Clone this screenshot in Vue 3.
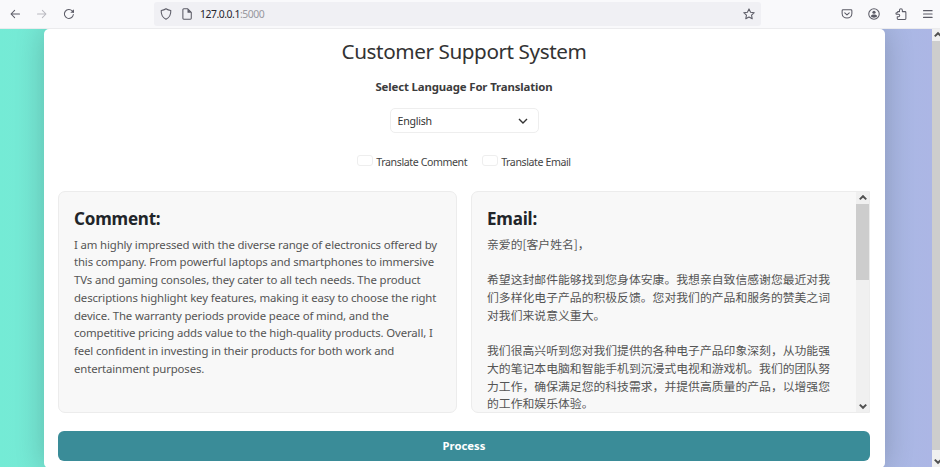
<script setup>
import { ref } from 'vue'

const language = ref('English')
const options = ['Translate Comment', 'Translate Email']
const comment = [
  'I am highly impressed with the diverse range of electronics offered by',
  'this company. From powerful laptops and smartphones to immersive',
  'TVs and gaming consoles, they cater to all tech needs. The product',
  'descriptions highlight key features, making it easy to choose the right',
  'device. The warranty periods provide peace of mind, and the',
  'competitive pricing adds value to the high-quality products. Overall, I',
  'feel confident in investing in their products for both work and',
  'entertainment purposes.',
]
const email = [
  '亲爱的[客户姓名]，',
  '',
  '希望这封邮件能够找到您身体安康。我想亲自致信感谢您最近对我',
  '们多样化电子产品的积极反馈。您对我们的产品和服务的赞美之词',
  '对我们来说意义重大。',
  '',
  '我们很高兴听到您对我们提供的各种电子产品印象深刻，从功能强',
  '大的笔记本电脑和智能手机到沉浸式电视和游戏机。我们的团队努',
  '力工作，确保满足您的科技需求，并提供高质量的产品，以增强您',
  '的工作和娱乐体验。',
]
</script>

<template>
  <div class="browser">
    <header class="toolbar">
      <nav class="history">
        <svg class="icon" viewBox="0 0 16 16"><path d="M14 8H3M7.5 3.2 2.7 8l4.8 4.8" /></svg>
        <svg class="icon faded" viewBox="0 0 16 16"><path d="M2 8h11M8.5 3.2 13.3 8l-4.8 4.8" /></svg>
        <svg class="icon" viewBox="0 0 16 16"><path d="M13.8 8.7A6 6 0 1 1 12.4 4L14 5.5" /><path class="solid" d="M14.6 1.6v4.8H9.8z" /></svg>
      </nav>
      <div class="address">
        <svg class="icon" viewBox="0 0 16 16"><path d="M8 1c2 1.400 4.200 2 6.400 2.200.3 5-1.600 9.400-6.400 11.800C3.200 12.600 1.300 8.200 1.600 3.200 3.800 3 6 2.400 8 1z" /></svg>
        <svg class="icon page" viewBox="0 0 16 16"><path d="M2.500 2.300q0-1.200 1.200-1.200h5.300l4.700 4.700v8q0 1.200-1.200 1.200H3.700q-1.200 0-1.200-1.200z" /><path class="solid" d="M8.700 1.200 13.700 6.300H8.700z" /></svg>
        <span class="url">127.0.0.1<i>:5000</i></span>
        <svg class="icon star" viewBox="0 0 16 16"><path d="m8 1.200 2.100 4.400 4.900.6-3.600 3.300.9 4.900L8 12.100l-4.300 2.300.9-4.900L1 6.200l4.900-.6z" /></svg>
      </div>
      <div class="tools">
        <svg class="icon" viewBox="0 0 16 16"><path d="M2.700 2.300h10.600q1.200 0 1.200 1.200V7.300c0 8.200-13 8.200-13 0V3.500q0-1.200 1.200-1.200z" /><path d="m5 6.400 3 2.800 3-2.800" /></svg>
        <svg class="icon" viewBox="0 0 16 16"><circle cx="8" cy="8" r="7" /><circle class="solid" cx="8" cy="5.700" r="2.100" /><path class="solid" d="M3.800 10.900c0-3 8.400-3 8.400 0-2 2.600-6.400 2.600-8.400 0z" /></svg>
        <svg class="icon" viewBox="0 0 16 16"><path d="M6 4.800V2.900a1.900 1.900 0 0 1 3.800 0v1.900h3.500q1.200 0 1.200 1.200v8q0 1.200-1.200 1.200H4.200Q3 15.200 3 14v-2.300h1.600a1.700 1.700 0 0 0 0-3.400H2.200Q1.300 8.300 1.300 7.400V7q0-.8.900-.8H3q0-1.400 1.200-1.400z" /></svg>
        <svg class="icon" viewBox="0 0 16 16"><path d="M2 3.500h11.500M2 8h11.500M2 12.500h11.500" /></svg>
      </div>
    </header>

    <div class="viewport">
      <div class="backdrop">
        <main class="card">
          <h1>Customer Support System</h1>
          <h2>Select Language For Translation</h2>
          <button class="select">
            <span>{{ language }}</span>
            <svg viewBox="0 0 10 10"><path d="m1 3 4 4 4-4" /></svg>
          </button>
          <div class="checks">
            <label v-for="option in options" :key="option"><span class="box"></span><span>{{ option }}</span></label>
          </div>
          <div class="panels">
            <section class="panel">
              <div class="content">
                <h3>Comment:</h3>
                <p v-for="line in comment" :key="line">{{ line }}</p>
              </div>
            </section>
            <section class="panel scrolls">
              <div class="content chinese">
                <h3>Email:</h3>
                <p v-for="(line, i) in email" :key="i">{{ line }}</p>
              </div>
              <div class="scrollbar">
                <svg viewBox="0 0 10 10"><path d="m2.300 6.200 2.700-2.700 2.700 2.700" /></svg>
                <div class="thumb"></div>
                <svg class="down" viewBox="0 0 10 10"><path d="m2.300 3.800 2.700 2.700 2.700-2.700" /></svg>
              </div>
            </section>
          </div>
          <button class="process">Process</button>
        </main>
      </div>
      <div class="page-scroll">
        <svg viewBox="0 0 10 10"><path d="m2.300 6.200 2.700-2.700 2.700 2.700" /></svg>
        <div class="thumb"></div>
        <svg class="end" viewBox="0 0 10 10"><path d="m2.300 3.800 2.700 2.700 2.700-2.700" /></svg>
      </div>
    </div>
  </div>
</template>

<style>
body { margin: 0; overflow: hidden; }
</style>

<style scoped>
* { box-sizing: border-box; }
.browser { width: 940px; height: 467px; display: flex; flex-direction: column; overflow: hidden; font-family: "Noto Sans", "Noto Sans CJK SC", sans-serif; color: #212529; }
svg { fill: none; stroke: currentColor; flex: none; }
h1, h2, h3, p { margin: 0; }
button { font: inherit; }
.toolbar { height: 29px; flex: none; display: flex; align-items: center; padding-bottom: 1px; background: #f9f9fb; border-bottom: 1px solid #ebebed; color: #5b5b66; }
.icon { width: 12px; height: 12px; stroke-width: 1.4; stroke-linejoin: round; stroke-linecap: round; }
.icon .solid { fill: currentColor; stroke: none; }
.faded { color: #b9b9c0; }
.history { width: 154px; display: flex; gap: 15px; padding-left: 9px; }
.address { width: 607px; height: 24px; display: flex; align-items: center; padding: 0 6px; border-radius: 3px; background: #f0f0f4; }
.page { margin-left: 9px; }
.url { flex: 1; margin-left: 7px; font-size: 10.4px; letter-spacing: -.46px; color: #25252d; }
.url i { font-style: normal; color: #98989f; }
.tools { display: flex; gap: 15px; margin-left: 80px; }
.viewport { flex: 1; display: flex; min-height: 0; }
.backdrop { width: 932px; overflow: hidden; padding-left: 44px; background: linear-gradient(90deg, #74ebd5, #acb6e5); }
.card { width: 841px; height: 439px; display: flex; flex-direction: column; align-items: center; padding: 7px 15px 0 14px; border-radius: 5px; background: #fff; box-shadow: 0 0 30px rgba(0, 0, 0, .2); white-space: nowrap; }
h1 { height: 30px; line-height: 30px; font-size: 20.7px; letter-spacing: -.42px; font-weight: 400; color: #333; }
h2 { height: 18px; margin-top: 12px; line-height: 18px; font-size: 11.4px; letter-spacing: -.14px; font-weight: 700; color: #3c3c3c; }
.select { width: 149px; height: 25px; margin-top: 12px; display: flex; align-items: center; justify-content: space-between; padding: 0 10px 0 7px; border: 1px solid #eee; border-radius: 5px; background: #fff; color: #333; font-size: 10.6px; letter-spacing: -.25px; }
.select svg { width: 10px; height: 10px; stroke-width: 1.4; }
.checks { height: 18px; margin-top: 20px; display: flex; gap: 15px; font-size: 10.6px; letter-spacing: -.4px; line-height: 19px; color: #444; }
.checks label { display: flex; gap: 3px; }
.box { width: 16px; height: 11px; margin-top: 2px; border: 1px solid #eee; border-radius: 3px; }
.panels { align-self: stretch; height: 222px; margin-top: 20px; display: grid; grid-template-columns: 399px 399px; gap: 14px; }
.panel { display: flex; min-width: 0; border: 1px solid #ececec; border-radius: 7px; background: #f8f8f8; overflow: hidden; }
.scrolls { border-radius: 7px 0 0 7px; }
.content { flex: 1; min-width: 0; padding: 15px 0 0 15px; overflow: hidden; }
h3 { height: 22px; margin-bottom: 6.5px; line-height: 23px; font-size: 17px; letter-spacing: -.2px; font-weight: 700; }
p { height: 17.76px; line-height: 17.76px; font-size: 11.4px; letter-spacing: -.142px; color: #555; }
.chinese h3 { margin-bottom: 5.5px; }
.chinese p { font-family: "Noto Sans CJK SC", sans-serif; font-size: 11.84px; letter-spacing: 0; }
.scrollbar { width: 13px; display: flex; flex-direction: column; align-items: center; background: #f0f0f0; color: #505050; }
.scrollbar svg, .page-scroll svg { width: 12px; height: 12px; stroke-width: 1.6; }
.scrollbar .thumb { width: 13px; height: 76px; background: #cdcdcd; }
.scrollbar .down { margin-top: auto; }
.process { align-self: stretch; height: 30px; margin-top: 18px; padding: 0 0 1px; border: 0; border-radius: 6px; background: #3a8c98; color: #fff; font-size: 11.3px; font-weight: 700; }
.page-scroll { width: 8px; display: flex; flex-direction: column; background: #f0f0f0; color: #505050; overflow: hidden; }
.page-scroll .thumb { height: 409px; background: #cdcdcd; }
.page-scroll .end { margin-top: 5px; }
</style>
